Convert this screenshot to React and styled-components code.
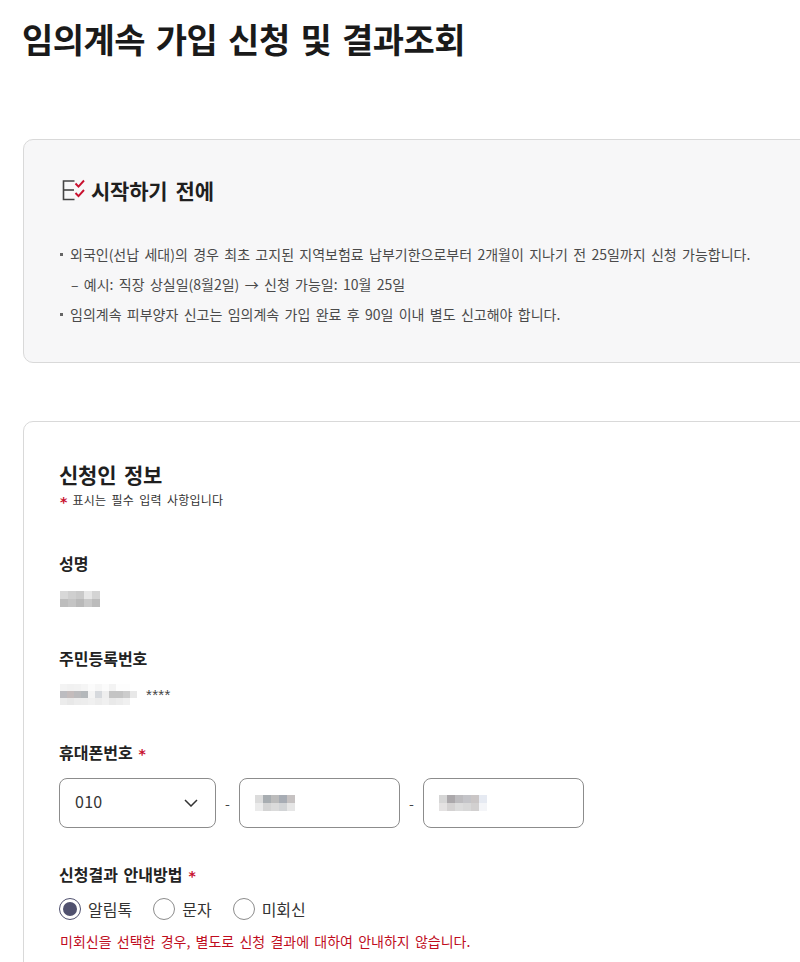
import React from "react";
import styled, { createGlobalStyle } from "styled-components";

const Global = createGlobalStyle`
  html, body { margin: 0; padding: 0; background: #fff; overflow: hidden; }
  body { font-family: "Noto Sans CJK KR", "Noto Sans", sans-serif; color: #1d1d1d; }
`;

const Page = styled.div`
  width: 800px;
  height: 962px;
  overflow: hidden;
  padding: 13px 0 0 23px;
  box-sizing: border-box;
`;
const Title = styled.h1`
  margin: 0 0 75px -1px;
  height: 51px;
  font-size: 34px;
  line-height: 51px;
  font-weight: 700;
  letter-spacing: -0.5px;
  word-spacing: 3.5px;
  color: #1a1a1a;
  white-space: nowrap;
`;
const Notice = styled.section`
  width: 1000px;
  height: 224px;
  box-sizing: border-box;
  background: #f7f7f8;
  border: 1px solid #d9d9d9;
  border-radius: 10px;
  padding: 35px 36px 0;
  margin-bottom: 58px;
`;
const NoticeHead = styled.div`
  display: flex;
  align-items: center;
  gap: 5px;
  height: 30px;
  margin-bottom: 34px;
  svg { margin-left: 2px; }
`;
const NoticeTitle = styled.h2`
  margin: 0;
  font-size: 21px;
  line-height: 30px;
  font-weight: 700;
  letter-spacing: -0.2px;
  word-spacing: 3.5px;
  color: #1f1f1f;
`;
const NoticeLine = styled.div`
  position: relative;
  font-size: 14px;
  line-height: 30px;
  height: 30px;
  color: #4a4a4a;
  word-spacing: 2.2px;
  white-space: nowrap;
  padding-left: ${(p) => (p.$sub ? "11px" : "10px")};
`;
const Dot = styled.span`
  position: absolute;
  left: 0;
  top: 14px;
  width: 3px;
  height: 3px;
  background: #666;
`;
const Form = styled.section`
  width: 1000px;
  height: 700px;
  box-sizing: border-box;
  background: #fff;
  border: 1px solid #d9d9d9;
  border-radius: 10px;
  padding: 35px 35px 0;
`;
const FormTitle = styled.h2`
  margin: 0;
  font-size: 21px;
  line-height: 34px;
  font-weight: 700;
  letter-spacing: -0.2px;
  word-spacing: 3px;
  color: #1f1f1f;
`;
const Required = styled.div`
  display: flex;
  align-items: center;
  gap: 5px;
  font-size: 12px;
  line-height: 18px;
  height: 18px;
  color: #333;
  letter-spacing: 0.2px;
  word-spacing: 2.4px;
  margin: 0 0 42px 1px;
`;
const Star = styled.span`
  color: #c8102e;
  font-family: "DejaVu Sans", sans-serif;
  font-weight: 700;
  font-size: 14px;
  line-height: 1;
  position: relative;
  top: 2px;
`;
const Label = styled.div`
  display: flex;
  align-items: center;
  gap: 6px;
  font-size: 16px;
  line-height: 24px;
  height: 24px;
  font-weight: 700;
  letter-spacing: 0;
  word-spacing: 2px;
  color: #222;
`;
const Field = styled.div`
  margin-bottom: ${(p) => p.$gap}px;
`;
const ValueRow = styled.div`
  display: flex;
  align-items: center;
  height: 24px;
  padding-left: 1px;
  margin-top: ${(p) => p.$top}px;
`;
const Mosaic = styled.div`
  display: grid;
  grid-template-columns: repeat(${(p) => p.$cols}, ${(p) => p.$cell}px);
  grid-auto-rows: ${(p) => p.$cell}px;
`;
const Cell = styled.i`
  display: block;
`;
const Masked = styled.span`
  font-family: "Liberation Sans", sans-serif;
  font-size: 15px;
  letter-spacing: 0.3px;
  margin: 1px 0 0 2px;
  color: #444;
`;
const PhoneRow = styled.div`
  display: flex;
  align-items: center;
  margin-top: 14px;
`;
const Box = styled.div`
  width: ${(p) => p.$w}px;
  height: 50px;
  box-sizing: border-box;
  border: 1px solid #8c8c8c;
  border-radius: 8px;
  display: flex;
  align-items: center;
  justify-content: space-between;
  padding: 0 17px 0 15px;
  background: #fff;
  font-size: 16px;
  letter-spacing: 0.3px;
  color: #333;
`;
const BoxText = styled.span`
  line-height: 20px;
  margin-top: -5px;
`;
const Dash = styled.span`
  width: 23px;
  text-align: center;
  font-size: 14px;
  color: #444;
`;
const RadioRow = styled.div`
  display: flex;
  align-items: center;
  height: 24px;
  margin-top: 11px;
`;
const RadioItem = styled.label`
  display: flex;
  align-items: center;
  gap: 7px;
  margin-right: 21px;
  font-size: 16px;
  color: #333;
`;
const RadioDot = styled.span`
  width: 22px;
  height: 22px;
  box-sizing: border-box;
  border-radius: 50%;
  border: 1px solid ${(p) => (p.$on ? "#50516f" : "#8c8c8c")};
  display: flex;
  align-items: center;
  justify-content: center;
  background: #fff;
  &::after {
    content: "";
    display: ${(p) => (p.$on ? "block" : "none")};
    width: 14px;
    height: 14px;
    border-radius: 50%;
    background: #50516f;
  }
`;
const Warn = styled.p`
  margin: 9px 0 0 1px;
  font-size: 14px;
  line-height: 22px;
  word-spacing: 2.1px;
  color: #c00d1e;
  white-space: nowrap;
`;

const ChecklistIcon = () => (
  <svg width="24" height="24" viewBox="0 0 24 24" fill="none">
    <path d="M12.5 3H1.5V21.5H12.5" stroke="#444" strokeWidth="1.6" />
    <path d="M1.5 12H12" stroke="#444" strokeWidth="1.6" />
    <path d="M13.5 5.5l3 3.2L22 2.5" stroke="#c8102e" strokeWidth="1.9" />
    <path d="M13.5 15l3 3.2L22 12" stroke="#c8102e" strokeWidth="1.9" />
  </svg>
);

const Chevron = () => (
  <svg width="14" height="8" viewBox="0 0 14 8" fill="none">
    <path d="M1 1l6 6 6-6" stroke="#333" strokeWidth="1.5" />
  </svg>
);

const Blur = ({ rows, cell = 6 }) => (
  <Mosaic $cols={rows[0].length} $cell={cell}>
    {rows.flat().map((c, i) => (
      <Cell key={i} style={{ background: c }} />
    ))}
  </Mosaic>
);

const nameBlur = [
  ["#d8d8d8", "#cfcfcf", "#c9c9c9", "#e6e6e6", "#d4d4d4"],
  ["#bdbdbd", "#c4c4c4", "#b9b9b9", "#c9c9c9", "#bcbcbc"],
];
const idBlur = [
  ["#f3f3f3", "#f1f1f1", "#f2f2f2", "#f5f5f5", "#fbfbfb", "#f6f6f6", "#fbfbfb", "#f3f3f3", "#fdfdfd", "#fdfdfd", "#fff", "#fff"],
  ["#bcbcc0", "#c4bcbc", "#bbbbbd", "#b4b8bb", "#f4f4f4", "#d6d9dd", "#eeeeee", "#c4c4c4", "#c4c4c4", "#ccc", "#e8e8e8", "#fff"],
  ["#ececec", "#e8e8e8", "#ececec", "#ededed", "#f0f0f0", "#ececec", "#f0f0f0", "#e9e9e9", "#ececec", "#f0f0f0", "#fff", "#fff"],
];
const phoneA = [
  ["#dcdcdc", "#a8adb1", "#bcbcbc", "#a7acb4", "#c6c2c2"],
  ["#ebebeb", "#d4d4d4", "#dbdbdb", "#d2d4d6", "#e6e6e6"],
];
const phoneB = [
  ["#d6d6d6", "#aba8ab", "#bdbcbf", "#c4c4c8", "#cac6c6", "#e6eaf2"],
  ["#e4e2e2", "#d4d2d2", "#dcdcdc", "#d8d8d8", "#d2d0d0", "#f4f5f8"],
];

export default function App() {
  return (
    <Page>
      <Global />
      <Title>임의계속 가입 신청 및 결과조회</Title>
      <Notice>
        <NoticeHead>
          <ChecklistIcon />
          <NoticeTitle>시작하기 전에</NoticeTitle>
        </NoticeHead>
        <NoticeLine>
          <Dot />
          외국인(선납 세대)의 경우 최초 고지된 지역보험료 납부기한으로부터 2개월이 지나기 전 25일까지 신청 가능합니다.
        </NoticeLine>
        <NoticeLine $sub>– 예시: 직장 상실일(8월2일) → 신청 가능일: 10월 25일</NoticeLine>
        <NoticeLine>
          <Dot />
          임의계속 피부양자 신고는 임의계속 가입 완료 후 90일 이내 별도 신고해야 합니다.
        </NoticeLine>
      </Notice>
      <Form>
        <FormTitle>신청인 정보</FormTitle>
        <Required>
          <Star>*</Star>
          <span>표시는 필수 입력 사항입니다</span>
        </Required>
        <Field $gap={35}>
          <Label>성명</Label>
          <ValueRow $top={12}>
            <Blur rows={nameBlur} cell={8} />
          </ValueRow>
        </Field>
        <Field $gap={34}>
          <Label>주민등록번호</Label>
          <ValueRow $top={12}>
            <Blur rows={idBlur} cell={7} />
            <Masked>****</Masked>
          </ValueRow>
        </Field>
        <Field $gap={34}>
          <Label>
            휴대폰번호 <Star>*</Star>
          </Label>
          <PhoneRow>
            <Box $w={157}>
              <BoxText>010</BoxText>
              <Chevron />
            </Box>
            <Dash>-</Dash>
            <Box $w={161}>
              <Blur rows={phoneA} cell={8} />
            </Box>
            <Dash>-</Dash>
            <Box $w={161}>
              <Blur rows={phoneB} cell={8} />
            </Box>
          </PhoneRow>
        </Field>
        <Field $gap={0}>
          <Label>
            신청결과 안내방법 <Star>*</Star>
          </Label>
          <RadioRow>
            <RadioItem>
              <RadioDot $on />
              알림톡
            </RadioItem>
            <RadioItem>
              <RadioDot />
              문자
            </RadioItem>
            <RadioItem>
              <RadioDot />
              미회신
            </RadioItem>
          </RadioRow>
          <Warn>미회신을 선택한 경우, 별도로 신청 결과에 대하여 안내하지 않습니다.</Warn>
        </Field>
      </Form>
    </Page>
  );
}
